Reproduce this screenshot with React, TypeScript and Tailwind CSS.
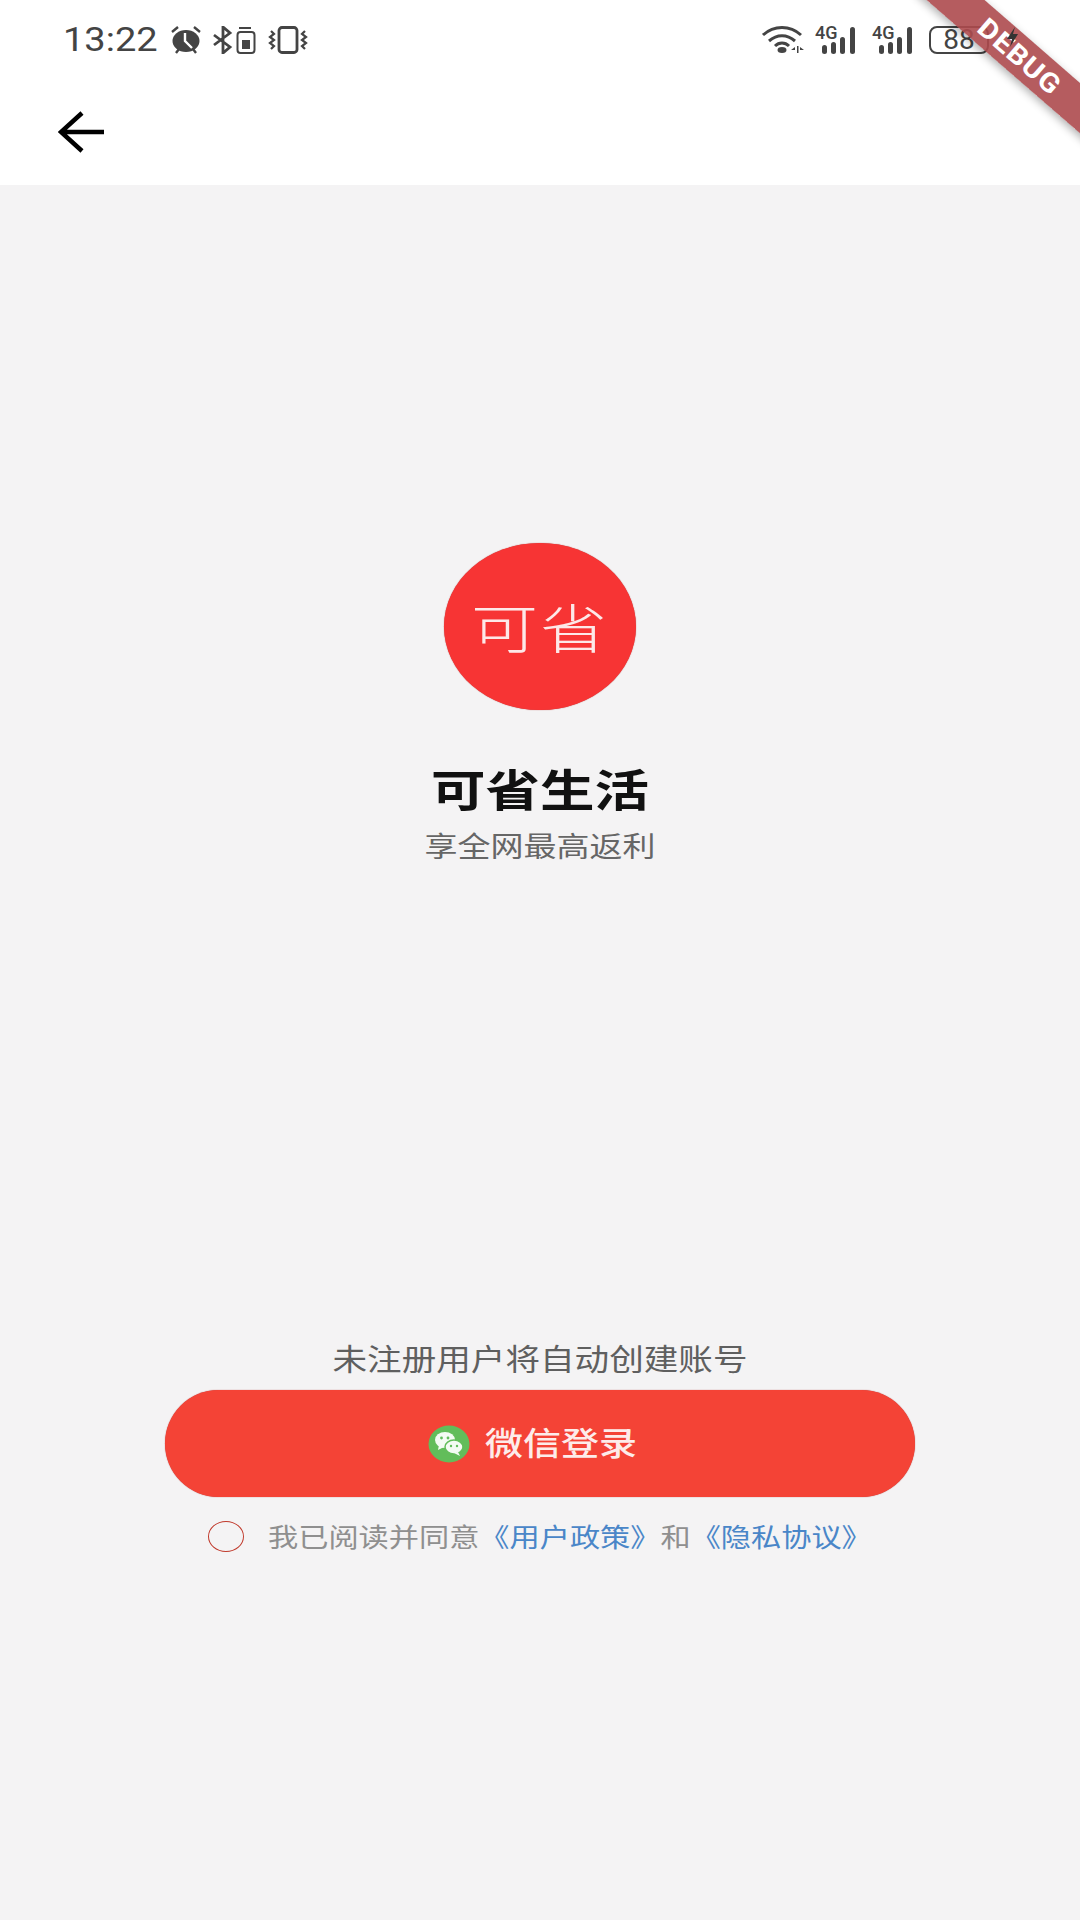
const cjk = 'font-["Noto_Sans_CJK_SC","Noto_Sans",sans-serif]';

function Alarm() {
  return (
    <svg width="32" height="28" viewBox="0 0 32 28" fill="none">
      <path d="M2 6 L8 1 M30 6 L24 1" stroke="#444" strokeWidth="2.4" />
      <path d="M6 27 L9 23 M26 27 L23 23" stroke="#444" strokeWidth="2.4" />
      <ellipse cx="16" cy="15" rx="13.5" ry="11" fill="#444" />
      <path d="M15 7 V15 L22 22" stroke="#fff" strokeWidth="2.4" />
    </svg>
  );
}

function BtBattery() {
  return (
    <svg width="44" height="28" viewBox="0 0 44 28" fill="none">
      <path d="M1 9 L17 21 L10 27 V1 L17 7 L1 19" stroke="#444" strokeWidth="2.8" />
      <rect x="26" y="1" width="12" height="2" fill="#444" />
      <rect x="24.5" y="6" width="17" height="21" rx="3" stroke="#444" strokeWidth="2" />
      <rect x="29" y="14" width="8" height="9" fill="#444" />
    </svg>
  );
}

function Vibrate() {
  return (
    <svg width="40" height="28" viewBox="0 0 40 28" fill="none">
      <rect x="11" y="1.5" width="18" height="25" rx="3" stroke="#444" strokeWidth="2.8" />
      <path d="M3 5 L6 8 L2 11 L6 14 L2 17 L6 20 L3 23" stroke="#444" strokeWidth="2.2" />
      <path d="M37 5 L34 8 L38 11 L34 14 L38 17 L34 20 L37 23" stroke="#444" strokeWidth="2.2" />
    </svg>
  );
}

function Wifi() {
  return (
    <svg width="42" height="28" viewBox="0 0 42 28" fill="none">
      <path d="M1 9 C12 -1 28 -1 39 9" stroke="#444" strokeWidth="3" />
      <path d="M7 15 C15 8 25 8 33 15" stroke="#444" strokeWidth="3" />
      <path d="M13 20 C17 16 23 16 27 20" stroke="#444" strokeWidth="3" />
      <ellipse cx="20" cy="24" rx="4.5" ry="3" fill="#444" />
      <path d="M33 21 L29 24 H33 Z M35 20 H36.5 V27 H35 Z M38 21 L42 24 H38 Z" fill="#444" />
    </svg>
  );
}

function Signal() {
  return (
    <div className="relative h-[30px] w-[46px]">
      <span className="absolute left-0 top-[-3px] font-['Roboto',sans-serif] text-[18px] leading-[22px] font-medium text-[#444]">4G</span>
      <svg className="absolute left-0 top-0" width="46" height="30" viewBox="0 0 46 30" fill="#444">
        <rect x="7" y="20" width="5" height="9" rx="2.5" />
        <rect x="16" y="17" width="5" height="12" rx="2.5" />
        <rect x="25" y="12" width="5" height="17" rx="2.5" />
        <rect x="35" y="2" width="5" height="27" rx="2.5" />
      </svg>
    </div>
  );
}

function WeChat() {
  return (
    <svg width="42" height="38" viewBox="0 0 42 38">
      <ellipse cx="21" cy="19" rx="20.5" ry="18.5" fill="#62bd5a" />
      <ellipse cx="17" cy="15" rx="10" ry="8" fill="#f4fbf3" />
      <path d="M11 20 L10 25 L16 22 Z" fill="#f4fbf3" />
      <ellipse cx="26" cy="22" rx="9" ry="7" fill="#f4fbf3" stroke="#62bd5a" strokeWidth="1.5" />
      <path d="M30 27 L32 31 L26 28 Z" fill="#f4fbf3" />
      <circle cx="13.5" cy="13" r="1.4" fill="#62bd5a" />
      <circle cx="20" cy="13" r="1.4" fill="#62bd5a" />
      <circle cx="23" cy="21" r="1.2" fill="#62bd5a" />
      <circle cx="29" cy="21" r="1.2" fill="#62bd5a" />
    </svg>
  );
}

export default function App() {
  return (
    <div className={`relative flex h-[1920px] w-[1080px] flex-col overflow-hidden bg-[#f4f3f4] ${cjk}`}>
      <header className="h-[185px] bg-white">
        <div className="flex h-[80px] items-center pl-[63px] pr-[91px]">
          <span className="w-[96px] origin-left scale-y-[0.86] font-['Roboto',sans-serif] text-[38px] leading-[40px] text-[#444]">13:22</span>
          <div className="ml-[11px] flex items-center gap-[11px]">
            <Alarm />
            <BtBattery />
            <Vibrate />
          </div>
          <div className="ml-auto flex items-center gap-[11px]">
            <Wifi />
            <Signal />
            <Signal />
            <div className="flex h-[28px] w-[60px] items-center justify-center rounded-[8px] border-2 border-[#444] font-['Roboto',sans-serif] text-[28px] leading-[28px] text-[#444]">
              88
            </div>
          </div>
        </div>
        <div className="flex h-[52px] items-center pt-[52px] pl-[58px]">
          <svg width="48" height="42" viewBox="0 0 48 42" fill="none">
            <path d="M46 21 H3 M24 2 L3 21 L24 40" stroke="#000" strokeWidth="4.5" />
          </svg>
        </div>
      </header>

      <main className="flex flex-1 flex-col items-center">
        <div className="mt-[358px] flex h-[167px] w-[192px] items-center justify-center rounded-[50%] bg-[#f73434] shadow-[0_0_1px_#a33]">
          <span className="mt-[-2px] scale-y-[0.8] text-[67px] leading-[70px] font-light tracking-[2px] text-[#fde8e8]">可省</span>
        </div>
        <h1 className="mt-[50px] scale-y-[0.82] text-[54.5px] leading-[56px] font-bold text-[#111]">可省生活</h1>
        <p className="mt-[11px] scale-y-[0.85] text-[33px] leading-[36px] text-[#666]">享全网最高返利</p>

        <p className="mt-[474px] scale-y-[0.85] text-[34.6px] leading-[40px] text-[#5f5f5f]">未注册用户将自动创建账号</p>
        <button className="mt-[13px] flex h-[107px] w-[750px] items-center justify-center gap-[15px] rounded-full bg-[#f44336] pr-[15px] shadow-[0_0_1px_#a33]">
          <WeChat />
          <span className="mt-[-6px] scale-y-[0.85] text-[38px] leading-[44px] font-medium text-[#fdecea]">微信登录</span>
        </button>
        <div className="mt-[22px] flex w-[750px] items-center pl-[43px]">
          <span className="h-[31px] w-[36px] rounded-[50%] border border-[#c0392b]" />
          <p className="ml-[24px] mt-[-1px] scale-y-[0.85] text-[30.2px] leading-[36px] whitespace-nowrap text-[#8f8f8f]">
            我已阅读并同意
            <span className="text-[#4a86c8]">《用户政策》</span>
            和
            <span className="text-[#4a86c8]">《隐私协议》</span>
          </p>
        </div>
      </main>

      <div className="absolute top-[37px] left-[900px] flex h-[38px] w-[240px] rotate-[41deg] items-center justify-center bg-[#ad4a4e]/90 font-['Roboto',sans-serif] text-[30px] font-bold tracking-[1px] text-white shadow-[0_3px_8px_rgba(0,0,0,0.3)]">
        <span className="scale-y-[0.9]">DEBUG</span>
      </div>
      <svg className="absolute top-[27px] right-[62px]" width="12" height="20" viewBox="0 0 12 20" fill="#333">
        <path d="M9 0 L1 12 H6 L4 20 L12 7 H7 Z" />
      </svg>
    </div>
  );
}
